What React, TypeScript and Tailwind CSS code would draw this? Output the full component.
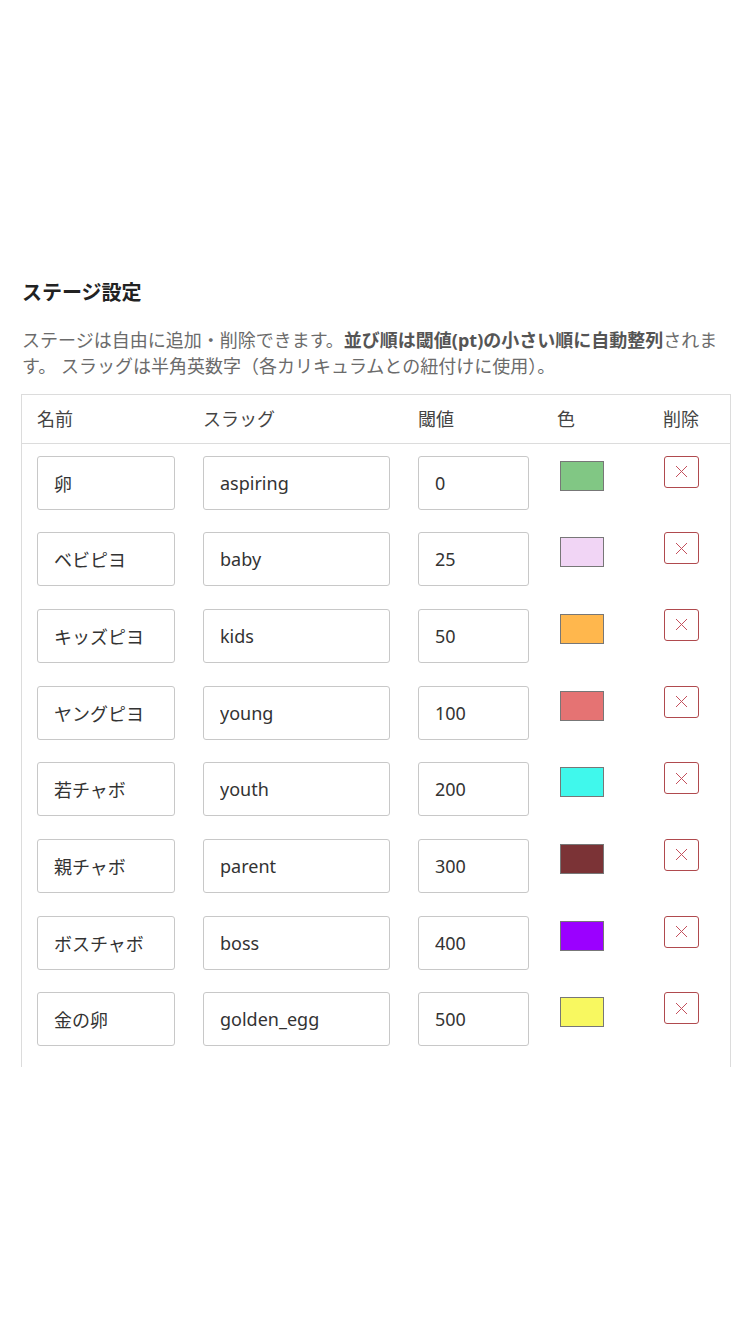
import React from "react";

const rows = [
  { name: "卵", slug: "aspiring", th: "0", color: "#81c784" },
  { name: "ベビピヨ", slug: "baby", th: "25", color: "#f1d5f5" },
  { name: "キッズピヨ", slug: "kids", th: "50", color: "#ffb74d" },
  { name: "ヤングピヨ", slug: "young", th: "100", color: "#e57373" },
  { name: "若チャボ", slug: "youth", th: "200", color: "#40f8ec" },
  { name: "親チャボ", slug: "parent", th: "300", color: "#7b3336" },
  { name: "ボスチャボ", slug: "boss", th: "400", color: "#9b00ff" },
  { name: "金の卵", slug: "golden_egg", th: "500", color: "#f8f860" },
];

const font = { fontFamily: '"Noto Sans", "Noto Sans CJK JP", sans-serif' };

function Field({ value, w }: { value: string; w: string }) {
  return (
    <input
      readOnly
      value={value}
      className={`${w} h-[54px] shrink-0 rounded-[3px] border border-[#c8c8c8] bg-white pl-[16px] text-[18px] text-[#333] outline-none`}
      style={font}
    />
  );
}

export default function App() {
  return (
    <div className="min-h-[1334px] w-[750px] bg-white pt-[279px]" style={font}>
      <div className="px-[21px]">
        <h2 className="h-[28px] pl-[1px] text-[20px] font-bold leading-[28px] text-[#222]">
          ステージ設定
        </h2>
        <p className="mt-[20px] pl-[1px] text-[18px] leading-[26px] text-[#6b6b6b]">
          ステージは自由に追加・削除できます。
          <b className="font-bold text-[#555]">並び順は閾値(pt)の小さい順に自動整列</b>
          されます。 スラッグは半角英数字（各カリキュラムとの紐付けに使用）。
        </p>
        <div className="mt-[15px] h-[673px] w-[710px] overflow-hidden border border-b-0 border-[#dcdcdc]">
          <div className="flex h-[49px] items-center gap-[28px] border-b border-[#dcdcdc] pl-[15px] pt-[1px] text-[18px] text-[#444]">
            <div className="w-[138px] shrink-0">名前</div>
            <div className="w-[187px] shrink-0">スラッグ</div>
            <div className="w-[111px] shrink-0">閾値</div>
            <div className="w-[78px] shrink-0">色</div>
            <div className="shrink-0">削除</div>
          </div>
          {rows.map((r) => (
            <div key={r.slug} className="flex h-[76.7px] items-start gap-[28px] pl-[15px] pt-[11.5px]">
              <Field value={r.name} w="w-[138px]" />
              <Field value={r.slug} w="w-[187px]" />
              <Field value={r.th} w="w-[111px]" />
              <div className="w-[78px] shrink-0 pl-[3px] pt-[5px]">
                <div
                  className="h-[30px] w-[44px] border border-[#777]"
                  style={{ backgroundColor: r.color }}
                />
              </div>
              <button className="ml-[1px] flex h-[32px] w-[35px] shrink-0 items-center justify-center rounded-[3px] border border-[#b04a4e] bg-white">
                <svg width="13" height="13" viewBox="0 0 13 13">
                  <path d="M1 1 L12 12 M12 1 L1 12" stroke="#c4505c" strokeWidth="1" />
                </svg>
              </button>
            </div>
          ))}
        </div>
      </div>
    </div>
  );
}
